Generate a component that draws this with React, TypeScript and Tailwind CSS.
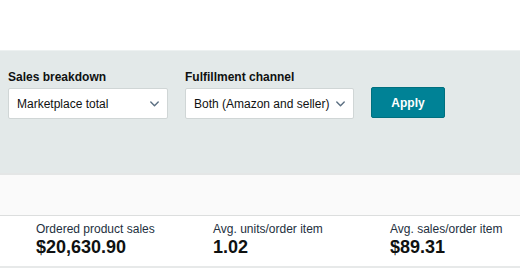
import React from "react";

function Chevron() {
  return (
    <svg width="9" height="6" viewBox="0 0 9 6" fill="none" className="shrink-0">
      <path d="M0.8 0.9 L4.5 4.7 L8.2 0.9" stroke="#5b6f82" strokeWidth="1.4" strokeLinecap="round" strokeLinejoin="round" />
    </svg>
  );
}

function Select({ label, value, width }: { label: string; value: string; width: string }) {
  return (
    <div className="flex flex-col gap-[3px] shrink-0">
      <div className="text-[12px] leading-[16px] font-bold text-[#0f1111]">{label}</div>
      <div className={`${width} h-[31px] bg-white border border-[#d0d6d6] rounded-[2px] flex items-center justify-between pl-[8px] pr-[8px]`}>
        <span className="text-[12px] text-[#0f1111]">{value}</span>
        <Chevron />
      </div>
    </div>
  );
}

function Metric({ label, value }: { label: string; value: string }) {
  return (
    <div className="w-[177px] shrink-0 flex flex-col">
      <div className="text-[12px] leading-[14px] text-[#232f3e]">{label}</div>
      <div className="text-[18px] leading-[22px] font-bold text-[#0f1111]">{value}</div>
    </div>
  );
}

export default function App() {
  return (
    <div className="w-[520px] h-[272px] bg-white overflow-hidden flex flex-col" style={{ fontFamily: '"Liberation Sans", Arial, sans-serif' }}>
      <div className="h-[50px] shrink-0 bg-white" />
      <div className="h-[123px] shrink-0 bg-[#e3e9e9] border-t border-[#edf1f1] pt-[18px] pl-[8px] flex items-start gap-[17px]">
        <Select label="Sales breakdown" value="Marketplace total" width="w-[160px]" />
        <Select label="Fulfillment channel" value="Both (Amazon and seller)" width="w-[169px]" />
        <div className="pt-[18px] shrink-0">
          <div className="w-[74px] h-[31px] bg-[#008296] border border-[#00707f] rounded-[2px] flex items-center justify-center text-white text-[12px] font-bold">
            Apply
          </div>
        </div>
      </div>
      <div className="h-[43px] shrink-0 bg-[#fafafa] border-t-2 border-b border-t-[#e4e6e6] border-b-[#dcdede]" />
      <div className="h-[50px] shrink-0 bg-white pl-[36px] pt-[6px] flex overflow-hidden">
        <Metric label="Ordered product sales" value="$20,630.90" />
        <Metric label="Avg. units/order item" value="1.02" />
        <Metric label="Avg. sales/order item" value="$89.31" />
      </div>
      <div className="h-[2px] shrink-0 bg-[#e7e9e9]" />
      <div className="flex-1 bg-white" />
    </div>
  );
}
